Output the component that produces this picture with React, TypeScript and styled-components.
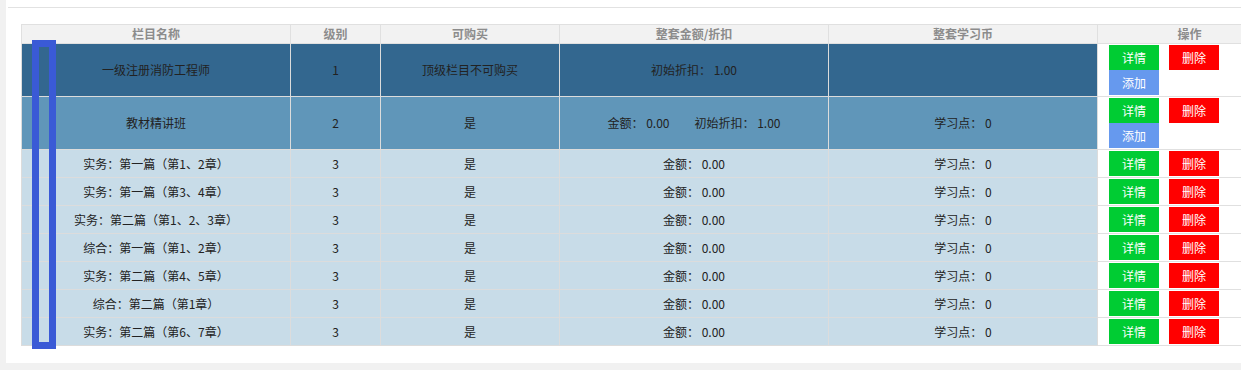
import styled, { createGlobalStyle } from "styled-components";

const GlobalStyle = createGlobalStyle`
  html, body {
    margin: 0;
    padding: 0;
    background: #f1f1f1;
    overflow: hidden;
  }
  body {
    font-family: "Noto Sans CJK SC", "Liberation Sans", sans-serif;
    font-size: 12px;
    color: #222;
  }
`;

const Page = styled.div`
  padding-left: 6px;
  width: 1300px;
`;

const Panel = styled.div`
  background: #fff;
  padding-bottom: 17px;
  position: relative;
`;

const TopBar = styled.div`
  height: 7px;
  margin-left: 2px;
  border-bottom: 1px solid #e2e2e2;
`;

const TableWrap = styled.div`
  padding: 16px 0 0 15px;
  position: relative;
`;

const Table = styled.table`
  border-collapse: collapse;
  table-layout: fixed;
  width: 1260px;
`;

const HeadCell = styled.th`
  height: 18px;
  padding: 0;
  background: #f2f2f2;
  border: 1px solid #e0e0e0;
  color: #8c8c8c;
  font-weight: bold;
  font-size: 12px;
  line-height: 18px;
  text-align: center;
`;

type Level = 1 | 2 | 3;

const rowBg: Record<Level, string> = {
  1: "#33678f",
  2: "#6096b9",
  3: "#c8dce8",
};

const Cell = styled.td<{ $level: Level }>`
  height: ${(p) => (p.$level === 3 ? 27 : 52)}px;
  padding: 0;
  background: ${(p) => rowBg[p.$level]};
  border: 1px solid #dcdcdc;
  text-align: center;
  vertical-align: middle;
  line-height: 16px;
  white-space: nowrap;
`;

const ActionCell = styled.td`
  padding: 1px 11px;
  background: #fff;
  border: 1px solid #e0e0e0;
  vertical-align: top;
`;

const Actions = styled.div`
  display: grid;
  grid-template-columns: 50px 50px;
  column-gap: 10px;
`;

const Btn = styled.span<{ $color: string }>`
  display: block;
  height: 25px;
  line-height: 25px;
  background: ${(p) => p.$color};
  color: #fff;
  text-align: center;
  font-size: 12px;
`;

const Second = styled.span`
  margin-left: 25px;
`;

const Marker = styled.div`
  position: absolute;
  left: 26px;
  top: 32px;
  width: 10px;
  height: 295px;
  border: 7px solid #3a5ad6;
`;

type Row = {
  name: string;
  level: Level;
  buy: string;
  amount: string | null;
  points: string | null;
};

const rows: Row[] = [
  { name: "一级注册消防工程师", level: 1, buy: "顶级栏目不可购买", amount: null, points: null },
  { name: "教材精讲班", level: 2, buy: "是", amount: "0.00", points: "0" },
  { name: "实务：第一篇（第1、2章）", level: 3, buy: "是", amount: "0.00", points: "0" },
  { name: "实务：第一篇（第3、4章）", level: 3, buy: "是", amount: "0.00", points: "0" },
  { name: "实务：第二篇（第1、2、3章）", level: 3, buy: "是", amount: "0.00", points: "0" },
  { name: "综合：第一篇（第1、2章）", level: 3, buy: "是", amount: "0.00", points: "0" },
  { name: "实务：第二篇（第4、5章）", level: 3, buy: "是", amount: "0.00", points: "0" },
  { name: "综合：第二篇（第1章）", level: 3, buy: "是", amount: "0.00", points: "0" },
  { name: "实务：第二篇（第6、7章）", level: 3, buy: "是", amount: "0.00", points: "0" },
];

function AmountText({ row }: { row: Row }) {
  if (row.level === 1) return <>初始折扣： 1.00</>;
  if (row.level === 2)
    return (
      <>
        <span>金额： {row.amount}</span>
        <Second>初始折扣： 1.00</Second>
      </>
    );
  return <>金额： {row.amount}</>;
}

export default function App() {
  return (
    <>
      <GlobalStyle />
      <Page>
        <Panel>
          <TopBar />
          <TableWrap>
            <Table>
              <colgroup>
                <col style={{ width: 269 }} />
                <col style={{ width: 90 }} />
                <col style={{ width: 179 }} />
                <col style={{ width: 269 }} />
                <col style={{ width: 269 }} />
                <col style={{ width: 184 }} />
              </colgroup>
              <thead>
                <tr>
                  <HeadCell>栏目名称</HeadCell>
                  <HeadCell>级别</HeadCell>
                  <HeadCell>可购买</HeadCell>
                  <HeadCell>整套金额/折扣</HeadCell>
                  <HeadCell>整套学习币</HeadCell>
                  <HeadCell>操作</HeadCell>
                </tr>
              </thead>
              <tbody>
                {rows.map((row) => (
                  <tr key={row.name}>
                    <Cell $level={row.level}>{row.name}</Cell>
                    <Cell $level={row.level}>{row.level}</Cell>
                    <Cell $level={row.level}>{row.buy}</Cell>
                    <Cell $level={row.level}>
                      <AmountText row={row} />
                    </Cell>
                    <Cell $level={row.level}>
                      {row.points !== null ? `学习点： ${row.points}` : ""}
                    </Cell>
                    <ActionCell>
                      <Actions>
                        <Btn $color="#00cc33">详情</Btn>
                        <Btn $color="#ff0000">删除</Btn>
                        {row.level < 3 && <Btn $color="#6699ee">添加</Btn>}
                      </Actions>
                    </ActionCell>
                  </tr>
                ))}
              </tbody>
            </Table>
            <Marker />
          </TableWrap>
        </Panel>
      </Page>
    </>
  );
}
